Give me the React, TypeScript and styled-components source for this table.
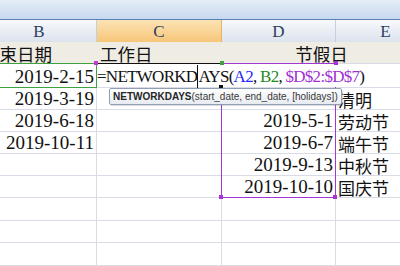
import React from 'react'
import styled, { createGlobalStyle } from 'styled-components'

const GlobalStyle = createGlobalStyle`
  html, body {
    margin: 0;
    padding: 0;
    background: #fff;
    overflow: hidden;
  }
`

const Page = styled.div`
  position: relative;
  width: 400px;
  height: 266px;
  overflow: hidden;
  background: #fff;
`

const Band = styled.div`
  height: 19px;
  border-bottom: 1px solid #5b80b6;
  background: linear-gradient(#e4edf8, #c8d8ee);
`

const Sheet = styled.div`
  margin-left: -18px;
`

const Row = styled.div<{ $h: number }>`
  display: grid;
  grid-template-columns: 115px 125px 114px 100px;
  height: ${({ $h }) => $h}px;
`

const ColHead = styled.div<{ $active?: boolean }>`
  box-sizing: border-box;
  display: flex;
  align-items: center;
  justify-content: center;
  padding-top: 2px;
  border-right: 1px solid ${({ $active }) => ($active ? '#e8b35c' : '#c3d0e0')};
  border-bottom: 1px solid ${({ $active }) => ($active ? '#e3a445' : '#a2b6cd')};
  background: ${({ $active }) =>
    $active ? 'linear-gradient(#fce3b4, #f7c67a)' : 'linear-gradient(#f7f9fc, #dce3ed)'};
  color: #2a3f5c;
  font-family: 'Liberation Serif', serif;
  font-size: 17px;
`

const Cell = styled.div<{ $align?: 'left' | 'right' | 'center'; $fill?: boolean; $span?: number; $clip?: boolean }>`
  box-sizing: border-box;
  display: flex;
  align-items: flex-end;
  justify-content: ${({ $align }) =>
    $align === 'right' ? 'flex-end' : $align === 'center' ? 'center' : 'flex-start'};
  grid-column: span ${({ $span }) => $span || 1};
  padding: 0 2px 1px 2px;
  border-right: 1px solid ${({ $fill }) => ($fill ? 'transparent' : '#d9dce6')};
  border-bottom: 1px solid #d9dce6;
  background: ${({ $fill }) => ($fill ? '#efece3' : '#fff')};
  color: #111;
  font-family: 'Liberation Serif', 'Noto Sans CJK SC', serif;
  font-size: 19px;
  line-height: 1;
  white-space: nowrap;
  overflow: ${({ $clip }) => ($clip ? 'hidden' : 'visible')};
`

const HeadText = styled.span<{ $indent?: number }>`
  font-family: 'Noto Sans CJK SC', sans-serif;
  font-size: 17.5px;
  line-height: 1;
  margin-left: ${({ $indent }) => $indent || 0}px;
`

const CjkText = styled.span`
  font-family: 'Noto Sans CJK SC', sans-serif;
  font-size: 17px;
  line-height: 1;
`

const RangeBox = styled.div<{ $color: string }>`
  position: absolute;
  box-sizing: border-box;
  border: 1px solid ${({ $color }) => $color};
  pointer-events: none;
  z-index: 1;
`

const Handle = styled.div<{ $color: string }>`
  position: absolute;
  width: 4px;
  height: 4px;
  background: ${({ $color }) => $color};
  z-index: 4;
`

const ActiveEdge = styled.div`
  position: absolute;
  left: 96px;
  top: 63px;
  width: 125px;
  height: 1px;
  background: #111;
  z-index: 3;
`

const EditBox = styled.div`
  position: absolute;
  left: 97px;
  top: 64px;
  height: 23px;
  box-sizing: border-box;
  padding: 0 4px 2px 0;
  display: flex;
  align-items: flex-end;
  background: #fff;
  color: #111;
  font-family: 'Liberation Serif', serif;
  font-size: 17px;
  letter-spacing: -0.72px;
  line-height: 1;
  white-space: pre;
  z-index: 2;
`

const Formula = styled.span`
  display: inline-block;
`

const Ref = styled.span<{ $color: string }>`
  color: ${({ $color }) => $color};
`

const Caret = styled.span`
  display: inline-block;
  width: 1px;
  height: 23px;
  margin-bottom: -3px;
  background: #111;
  vertical-align: bottom;
`

const Tip = styled.div`
  position: absolute;
  left: 109px;
  top: 88px;
  height: 17px;
  box-sizing: border-box;
  padding: 0 3px;
  display: flex;
  align-items: center;
  border: 1px solid #8e9fb6;
  border-radius: 2px;
  background: linear-gradient(#ffffff, #e7ebf1);
  box-shadow: 1px 1px 1px rgba(0, 0, 0, 0.15);
  color: #3a3a3a;
  font-family: 'Liberation Sans', Arial, sans-serif;
  font-size: 10px;
  white-space: nowrap;
  z-index: 5;
`

const TipName = styled.b`
  color: #262626;
  font-weight: 700;
`

type DataRow = { h: number; b?: string; d?: string; e?: string }

const dataRows: DataRow[] = [
  { h: 24, b: '2019-2-15' },
  { h: 22, b: '2019-3-19', d: '2019-4-5', e: '清明' },
  { h: 22, b: '2019-6-18', d: '2019-5-1', e: '劳动节' },
  { h: 22, b: '2019-10-11', d: '2019-6-7', e: '端午节' },
  { h: 22, d: '2019-9-13', e: '中秋节' },
  { h: 22, d: '2019-10-10', e: '国庆节' },
  { h: 23 },
  { h: 22 },
  { h: 23 },
]

const App: React.FC = () => {
  return (
    <Page>
      <GlobalStyle />
      <Band />
      <Sheet>
        <Row $h={22}>
          <ColHead>B</ColHead>
          <ColHead $active>C</ColHead>
          <ColHead>D</ColHead>
          <ColHead>E</ColHead>
        </Row>
        <Row $h={22}>
          <Cell $fill $clip>
            <HeadText $indent={-2}>结束日期</HeadText>
          </Cell>
          <Cell $fill>
            <HeadText $indent={1}>工作日</HeadText>
          </Cell>
          <Cell $fill $align="center" $span={2}>
            <HeadText $indent={-14}>节假日</HeadText>
          </Cell>
        </Row>
        {dataRows.map((r, i) => (
          <Row key={i} $h={r.h}>
            <Cell $align="right">{r.b}</Cell>
            <Cell />
            <Cell $align="right">{r.d}</Cell>
            <Cell>{r.e && <CjkText>{r.e}</CjkText>}</Cell>
          </Row>
        ))}
      </Sheet>

      <RangeBox $color="#3fa03f" style={{ left: -2, top: 63, width: 99, height: 25 }} />
      <RangeBox $color="#a236d6" style={{ left: 221, top: 63, width: 115, height: 135 }} />
      <ActiveEdge />
      <Handle $color="#c43bd0" style={{ left: 94, top: 61 }} />
      <Handle $color="#3fa03f" style={{ left: 220, top: 61 }} />
      <Handle $color="#a236d6" style={{ left: 334, top: 61 }} />
      <Handle $color="#111" style={{ left: 219, top: 85 }} />
      <Handle $color="#a236d6" style={{ left: 219, top: 195 }} />
      <Handle $color="#a236d6" style={{ left: 333, top: 195 }} />

      <EditBox>
        <Formula>
          {'=NETWORKD'}
          <Caret />
          {'AYS('}
          <Ref $color="#2727ff">A2</Ref>
          {', '}
          <Ref $color="#1f8a1f">B2</Ref>
          {', '}
          <Ref $color="#a12fd2">$D$2:$D$7</Ref>
          {')'}
        </Formula>
      </EditBox>

      <Tip>
        <TipName>NETWORKDAYS</TipName>(start_date, end_date, [holidays])
      </Tip>
    </Page>
  )
}

export default App
